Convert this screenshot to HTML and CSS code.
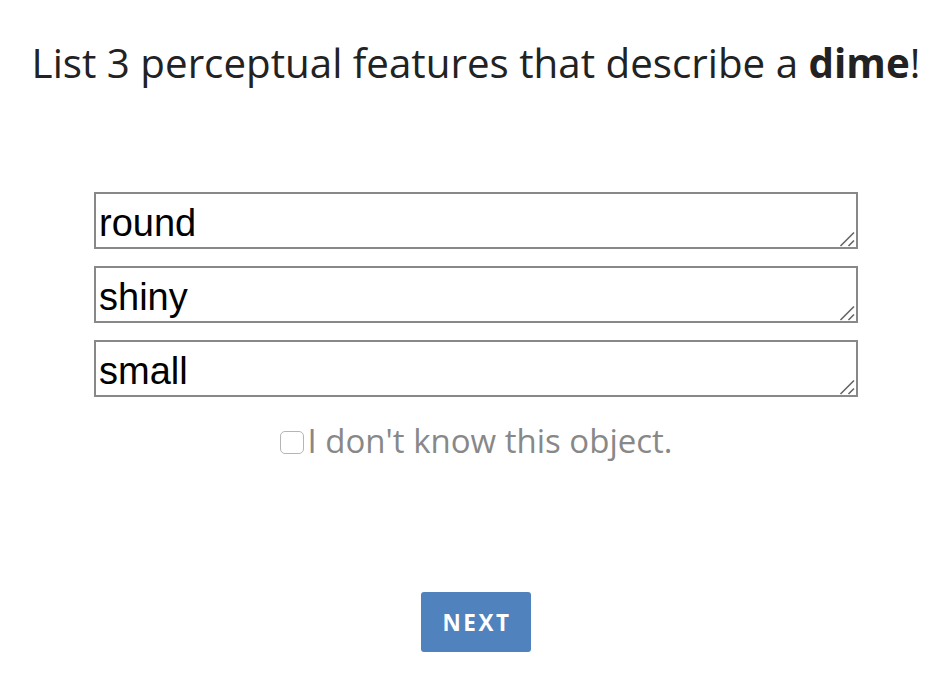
FILE: index.html
```html
<!DOCTYPE html>
<html>
<head>
<meta charset="utf-8">
<link rel="stylesheet" href="styles.css">
</head>
<body>
<div class="page">
  <h1 class="title">List 3 perceptual features that describe a <b>dime</b>!</h1>
  <div class="answers">
    <textarea class="answer">round</textarea>
    <textarea class="answer">shiny</textarea>
    <textarea class="answer">small</textarea>
  </div>
  <label class="unknown"><input type="checkbox" class="check">I don't know this object.</label>
  <button class="next">NEXT</button>
</div>
</body>
</html>
```
FILE: styles.css
```css
html, body {
  margin: 0;
  padding: 0;
  background: #fff;
}
.page {
  display: flex;
  flex-direction: column;
  align-items: center;
  font-family: "Open Sans", sans-serif;
}
.title {
  margin: 36px 0 0;
  font-size: 40.3px;
  font-weight: 400;
  color: #222;
  line-height: 54px;
}
.title b {
  font-weight: 700;
}
.answers {
  margin-top: 102px;
  display: flex;
  flex-direction: column;
  gap: 17px;
}
.answer {
  box-sizing: border-box;
  width: 764px;
  height: 57px;
  margin: 0;
  border: 2px solid #888;
  padding: 7px 3px 0;
  font-family: "Liberation Sans", Arial, sans-serif;
  font-size: 38px;
  line-height: 44px;
  color: #000;
  overflow: hidden;
  resize: none;
  background: #fff url("data:image/svg+xml,%3Csvg xmlns='http://www.w3.org/2000/svg' width='16' height='16'%3E%3Cpath d='M1.5 15 L15 1.5 M9.5 15 L15 9.5' stroke='%23666' stroke-width='1.6' fill='none'/%3E%3C/svg%3E") no-repeat right 1px bottom 0;
}
.unknown {
  margin-top: 24px;
  display: flex;
  align-items: center;
  font-size: 33px;
  color: #888;
  line-height: 40px;
}
.check {
  appearance: none;
  -webkit-appearance: none;
  box-sizing: border-box;
  width: 24px;
  height: 23px;
  margin: 2px 4px 0 0;
  border: 1px solid #b5b5b5;
  border-radius: 5px;
  background: #fff;
}
.next {
  margin-top: 131px;
  width: 110px;
  height: 60px;
  border: none;
  border-radius: 3px;
  background: #5082bd;
  color: #fff;
  font-family: "Open Sans", sans-serif;
  font-weight: 700;
  font-size: 22.5px;
  letter-spacing: 2.5px;
  padding: 0 0 0 2px;
}
```
